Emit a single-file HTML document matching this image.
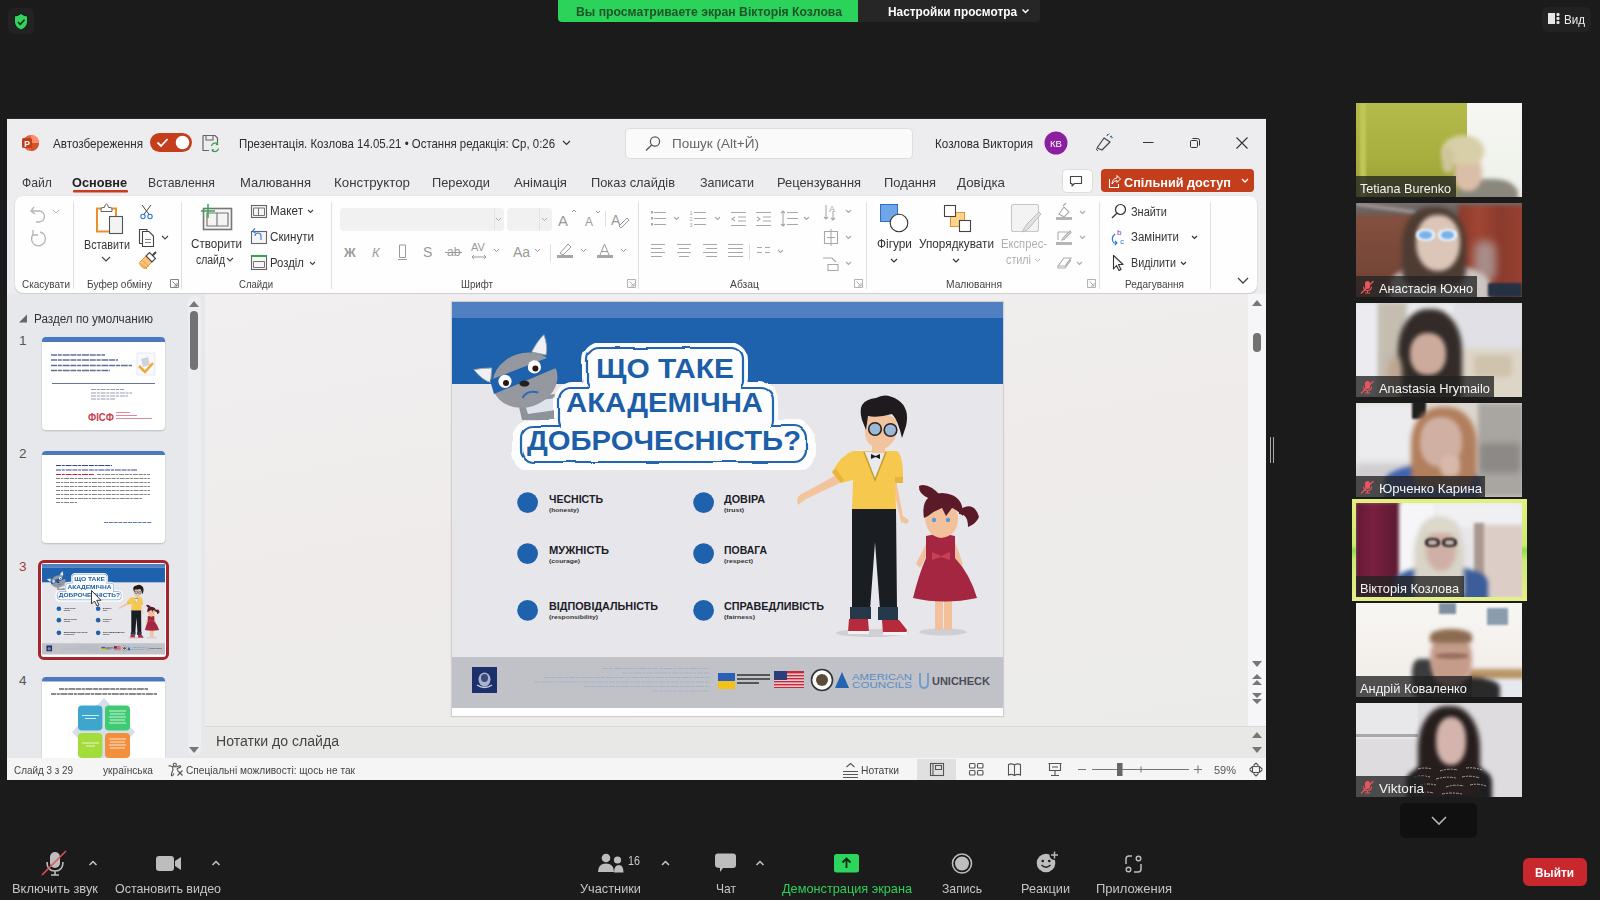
<!DOCTYPE html>
<html><head><meta charset="utf-8">
<style>
*{margin:0;padding:0;box-sizing:border-box}
html,body{width:1600px;height:900px;overflow:hidden;background:#1b1b1b;font-family:"Liberation Sans",sans-serif}
.a{position:absolute}
.t{position:absolute;white-space:nowrap;line-height:1}
#win{left:7px;top:119px;width:1259px;height:661px;background:#ececef;overflow:hidden}
#ribbon{left:8px;top:77px;width:1242px;height:97px;background:#fdfdfd;border-radius:7px;box-shadow:0 1px 2px rgba(0,0,0,.18)}
#leftp{left:0;top:175px;width:198px;height:463px;background:#e6e8eb}
#edit{left:198px;top:175px;width:1061px;height:432px;background:linear-gradient(160deg,#f1eff0,#efebeb 50%,#ecedeb)}
#notes{left:198px;top:607px;width:1061px;height:31px;background:#e9eae8;border-top:1px solid #dcdcdc}
#status{left:0;top:638px;width:1259px;height:23px;background:#f3f3f3}
.tile{position:absolute;left:1356px;width:166px;height:94px;overflow:hidden;background:#555}
.nm{position:absolute;left:0;bottom:0;height:21px;background:rgba(30,30,30,.72);color:#fff;font-size:13px;line-height:21px;padding:0 4px;white-space:nowrap}
.bl{position:absolute}
.tb{position:absolute;color:#c6c6c6;font-size:13px;white-space:nowrap;line-height:1}
</style></head><body>

<!-- top zoom bar -->
<div class="a" style="left:8px;top:8px;width:26px;height:26px;background:#222;border-radius:5px"></div>
<div class="a" style="left:558px;top:0;width:300px;height:22px;background:#2bd35a;border-radius:0 0 0 4px"></div>
<div class="t" style="left:576px;top:5px;font-size:13px;font-weight:bold;color:#1d5429;--w:266px;transform:scaleX(0.9400);transform-origin:0 0">Вы просматриваете экран Вікторія Козлова</div>
<div class="a" style="left:858px;top:0;width:182px;height:22px;background:#262626;border-radius:0 0 4px 0"></div>
<div class="t" style="left:888px;top:5px;font-size:13px;font-weight:bold;color:#fff;--w:129px;transform:scaleX(0.9111);transform-origin:0 0">Настройки просмотра</div>
<div class="a" style="left:1542px;top:7px;width:49px;height:25px;background:#222;border-radius:6px"></div>
<div class="t" style="left:1564px;top:13px;font-size:13px;color:#eee;--w:21px;transform:scaleX(0.8924);transform-origin:0 0">Вид</div>

<!-- PowerPoint window -->
<div class="a" style="left:7px;top:118px;width:1259px;height:662px;background:#edecef;border-top:1px solid #2a2a2a"></div>
<!-- TITLEBAR -->
<svg class="a" style="left:0;top:0" width="1600" height="900" viewBox="0 0 1600 900">
 <!-- ppt logo -->
 <circle cx="31" cy="143" r="8" fill="#e0663c"/>
 <path d="M31 135 A8 8 0 0 1 39 143 L31 143Z" fill="#ff8f6b"/>
 <path d="M31 143 L39 143 A8 8 0 0 1 31 151Z" fill="#d35230"/>
 <rect x="22" y="138" width="10" height="10" rx="1.5" fill="#c43e1c"/>
 <text x="24.2" y="146.6" font-family="Liberation Sans" font-weight="bold" font-size="8.5" fill="#fff">P</text>
 <!-- toggle -->
 <rect x="150" y="133" width="42" height="19" rx="9.5" fill="#c43e1c"/>
 <circle cx="182.5" cy="142.5" r="6.8" fill="#fff"/>
 <path d="M157.5 142.5 L161 146 L167.5 139" stroke="#fff" stroke-width="1.8" fill="none"/>
 <!-- save icon -->
 <path d="M203 135.5 H215 L217.5 138 V143 M203 135.5 V150.5 H209" stroke="#666" stroke-width="1.2" fill="none"/>
 <path d="M206 135.5 V140 H213 V135.5" stroke="#666" stroke-width="1.1" fill="none"/>
 <path d="M211.5 146 A3.6 3.6 0 0 1 218 144.5 M218.5 148.5 A3.6 3.6 0 0 1 212 150" stroke="#2e9e4a" stroke-width="1.3" fill="none"/>
 <path d="M217 142.5 L218.3 145 L215.5 145.3Z M212.6 152 L211.5 149.3 L214.3 149.2Z" fill="#2e9e4a"/>
 <!-- title chevron -->
 <path d="M563 141 L566.5 144.5 L570 141" stroke="#333" stroke-width="1.2" fill="none"/>
 <!-- search box -->
 <rect x="625.5" y="128.5" width="287" height="30" rx="4" fill="#fbfafb" stroke="#dedcde"/>
 <circle cx="655" cy="141.5" r="4.6" stroke="#555" stroke-width="1.2" fill="none"/>
 <path d="M651.6 145 L646 150.5" stroke="#555" stroke-width="1.3"/>
 <!-- avatar -->
 <circle cx="1056" cy="143" r="11.5" fill="#8b1fa0"/>
 <!-- designer pen -->
 <path d="M1097 148 L1104 138 L1110 142 L1102 150 Z" stroke="#444" stroke-width="1.2" fill="none" stroke-linejoin="round"/>
 <path d="M1096 149 L1098 151 M1107 136 L1108 134 M1110 137 L1112 136" stroke="#444" stroke-width="1"/>
 <path d="M1108 135 L1109.5 133.5 M1111 138 L1113 137.5" stroke="#1a8fd6" stroke-width="1"/>
 <!-- window controls -->
 <path d="M1143 142.5 H1153.5" stroke="#333" stroke-width="1"/>
 <rect x="1190.5" y="140.5" width="7" height="7" rx="1.2" stroke="#333" fill="none"/>
 <path d="M1192.5 138.5 H1197.5 Q1199.5 138.5 1199.5 140.5 V145.5" stroke="#333" fill="none"/>
 <path d="M1236.5 137.5 L1247.5 148.5 M1247.5 137.5 L1236.5 148.5" stroke="#333" stroke-width="1.1"/>
 <!-- menu underline -->
 <rect x="73" y="190" width="55" height="2.5" rx="1" fill="#c43e1c"/>
 <!-- comment btn -->
 <rect x="1062.5" y="169.5" width="30" height="23" rx="4" fill="#fdfdfd" stroke="#dcdcdc"/>
 <path d="M1070.5 176.5 H1081.5 V183.5 H1074.5 L1072 186 V183.5 H1070.5 Z" stroke="#444" stroke-width="1.1" fill="none" stroke-linejoin="round"/>
 <!-- share btn -->
 <rect x="1101" y="169" width="153" height="23" rx="4" fill="#c43e1c"/>
 <path d="M1109.5 179 V187.5 H1118.5 V184" stroke="#fff" stroke-width="1.1" fill="none"/>
 <path d="M1112 184 Q1112.5 178.5 1117 178 V175.5 L1120.5 179 L1117 182.5 V180.5 Q1114 180.5 1112 184Z" stroke="#fff" stroke-width="1" fill="none" stroke-linejoin="round"/>
 <path d="M1242 179 L1245 182 L1248 179" stroke="#fff" stroke-width="1.3" fill="none"/>
</svg>
<div class="t" style="left:53px;top:137px;font-size:13px;color:#2d2d2d;--w:90px;transform:scaleX(0.8985);transform-origin:0 0">Автозбереження</div>
<div class="t" style="left:239px;top:137px;font-size:13px;color:#2d2d2d;--w:316px;transform:scaleX(0.8781);transform-origin:0 0">Презентація. Козлова 14.05.21 • Остання редакція: Ср, 0:26</div>
<div class="t" style="left:672px;top:137px;font-size:13px;color:#666;--w:87px;transform:scaleX(1.0409);transform-origin:0 0">Пошук (Alt+Й)</div>
<div class="t" style="left:935px;top:137px;font-size:13px;color:#2d2d2d;--w:98px;transform:scaleX(0.8960);transform-origin:0 0">Козлова Виктория</div>
<div class="t" style="left:1050px;top:139px;font-size:9.5px;color:#fff;--w:12px;transform:scaleX(1.0105);transform-origin:0 0">КВ</div>
<div class="t" style="left:22px;top:176px;font-size:13.5px;color:#3a3a3a;--w:30px;transform:scaleX(0.9035);transform-origin:0 0">Файл</div>
<div class="t" style="left:72px;top:176px;font-size:13.5px;color:#222;font-weight:bold;--w:55px;transform:scaleX(0.9422);transform-origin:0 0">Основне</div>
<div class="t" style="left:148px;top:176px;font-size:13.5px;color:#3a3a3a;--w:67px;transform:scaleX(0.9083);transform-origin:0 0">Вставлення</div>
<div class="t" style="left:240px;top:176px;font-size:13.5px;color:#3a3a3a;--w:71px;transform:scaleX(0.9637);transform-origin:0 0">Малювання</div>
<div class="t" style="left:334px;top:176px;font-size:13.5px;color:#3a3a3a;--w:76px;transform:scaleX(0.9872);transform-origin:0 0">Конструктор</div>
<div class="t" style="left:432px;top:176px;font-size:13.5px;color:#3a3a3a;--w:58px;transform:scaleX(0.9481);transform-origin:0 0">Переходи</div>
<div class="t" style="left:514px;top:176px;font-size:13.5px;color:#3a3a3a;--w:53px;transform:scaleX(0.9761);transform-origin:0 0">Анімація</div>
<div class="t" style="left:591px;top:176px;font-size:13.5px;color:#3a3a3a;--w:84px;transform:scaleX(0.9498);transform-origin:0 0">Показ слайдів</div>
<div class="t" style="left:700px;top:176px;font-size:13.5px;color:#3a3a3a;--w:54px;transform:scaleX(0.9278);transform-origin:0 0">Записати</div>
<div class="t" style="left:777px;top:176px;font-size:13.5px;color:#3a3a3a;--w:84px;transform:scaleX(0.9544);transform-origin:0 0">Рецензування</div>
<div class="t" style="left:884px;top:176px;font-size:13.5px;color:#3a3a3a;--w:52px;transform:scaleX(0.9536);transform-origin:0 0">Подання</div>
<div class="t" style="left:957px;top:176px;font-size:13.5px;color:#3a3a3a;--w:48px;transform:scaleX(0.9884);transform-origin:0 0">Довідка</div>
<div class="t" style="left:1124px;top:176px;font-size:13.5px;color:#fff;font-weight:bold;--w:107px;transform:scaleX(0.9403);transform-origin:0 0">Спільний доступ</div>
<!-- /TITLEBAR -->
<!-- RIBBON -->
<div class="a" style="left:15px;top:196px;width:1242px;height:97px;background:#fefefe;border-radius:8px;box-shadow:0 1px 2px rgba(0,0,0,.16),0 0 1px rgba(0,0,0,.08)"></div>
<svg class="a" style="left:0;top:0" width="1600" height="900" viewBox="0 0 1600 900">
 <g stroke="#e1e1e1" stroke-width="1">
  <path d="M73.5 202 V289 M181.5 202 V289 M331.5 202 V289 M638.5 202 V289 M866.5 202 V289 M1099.5 202 V289 M1210.5 202 V289"/>
  <path d="M605.5 211 V227 M550.5 244 V262 M749.5 244 V260"/>
 </g>
 <!-- launchers -->
 <g stroke="#777" stroke-width="0.9" fill="none">
  <path d="M170.5 279.5 H178.5 V287.5 M170.5 279.5 V287.5 H178.5 M172.5 281.5 L177 286 M177 283 V286 H174"/>
 </g>
 <g stroke="#aaa" stroke-width="0.9" fill="none">
  <path d="M627.5 279.5 H635.5 V287.5 M627.5 279.5 V287.5 H635.5 M629.5 281.5 L634 286 M634 283 V286 H631"/>
  <path d="M854.5 279.5 H862.5 V287.5 M854.5 279.5 V287.5 H862.5 M856.5 281.5 L861 286 M861 283 V286 H858"/>
  <path d="M1087.5 279.5 H1095.5 V287.5 M1087.5 279.5 V287.5 H1095.5 M1089.5 281.5 L1094 286 M1094 283 V286 H1091"/>
 </g>
 <!-- undo/redo -->
 <g stroke="#b4b4b4" stroke-width="1.3" fill="none">
  <path d="M34 207 L31 211 L35 214 M31.5 211 H39 A5.5 5.5 0 0 1 39 222 H36"/>
  <path d="M53 210 L56 213 L59 210" stroke-width="1"/>
  <path d="M40 232 A7 7 0 1 1 33 234.5 M33 230 V235 H38"/>
 </g>
 <!-- paste -->
 <path d="M102 208.5 H97 V231.5 H109" stroke="#e8912b" stroke-width="2" fill="#fff"/>
 <path d="M111 208.5 H116 V216" stroke="#e8912b" stroke-width="2" fill="none"/>
 <path d="M101 211.5 V209 Q101 207.5 103 207.5 H104.5 Q105 204 106.5 204 Q108 204 108.5 207.5 H110 Q112 207.5 112 209 V211.5 Z" fill="#fff" stroke="#666" stroke-width="1"/>
 <rect x="109.5" y="216.5" width="13" height="17" fill="#f3f3f3" stroke="#555" stroke-width="1.1"/>
 <path d="M102 257 L106 261 L110 257" stroke="#444" stroke-width="1.1" fill="none"/>
 <!-- cut -->
 <g stroke="#444" stroke-width="1" fill="none">
  <path d="M142 205 L149.5 215 M151 205 L143.5 215"/>
 </g>
 <circle cx="143" cy="216.5" r="2.2" stroke="#2b7cd3" stroke-width="1.1" fill="none"/>
 <circle cx="150" cy="216.5" r="2.2" stroke="#2b7cd3" stroke-width="1.1" fill="none"/>
 <!-- copy -->
 <path d="M142 243.5 H139.5 V229.5 H147 V231" stroke="#444" stroke-width="1.1" fill="none"/>
 <path d="M142.5 231.5 H149 L153.5 236 V246.5 H142.5 Z" stroke="#444" stroke-width="1.1" fill="#fff"/>
 <path d="M145 239.5 H151 M145 242.5 H151" stroke="#666" stroke-width="0.8"/>
 <path d="M162 236 L165 239 L168 236" stroke="#444" stroke-width="1.1" fill="none"/>
 <!-- format painter -->
 <path d="M139.5 262.5 L146 256 L152 262 L145.5 268.5 Q141 268 139.5 262.5Z" fill="#f8c27a" stroke="#e8912b" stroke-width="1"/>
 <path d="M141.5 264 L147 269 M143 261 L149 266.5" stroke="#e8912b" stroke-width="0.8"/>
 <path d="M146 256 L149.5 252.5 L155.5 258.5 L152 262Z" fill="#fff" stroke="#444" stroke-width="1.1"/>
 <path d="M152.5 255.5 L156 252" stroke="#444" stroke-width="2"/>
 <!-- new slide -->
 <rect x="203.5" y="208.5" width="28" height="21" fill="#f4f4f4" stroke="#777" stroke-width="1.6"/>
 <path d="M207 213 H228 V226 H207 Z M217 213 V226" stroke="#777" stroke-width="1.2" fill="none"/>
 <path d="M208 204 V218 M201 211 H215" stroke="#36a852" stroke-width="1.5"/>
 <path d="M227 258 L230 261 L233 258" stroke="#444" stroke-width="1.1" fill="none"/>
 <!-- layout -->
 <rect x="251.5" y="205.5" width="15" height="12" stroke="#666" stroke-width="1.1" fill="#f5f5f5"/>
 <path d="M253.5 208 H264.5 V215.5 H253.5Z M258.5 208 V215.5" stroke="#666" stroke-width="0.9" fill="none"/>
 <path d="M308 210 L310.5 212.5 L313 210" stroke="#444" stroke-width="1.1" fill="none"/>
 <!-- reset -->
 <rect x="251.5" y="231.5" width="15" height="12" stroke="#666" stroke-width="1.1" fill="#f5f5f5"/>
 <path d="M255 236 A3 3 0 0 1 261 236 V240" stroke="#2b7cd3" stroke-width="1.1" fill="none"/>
 <path d="M252.5 231 L255 228.5 M252.5 231 L255.5 233" stroke="#2b7cd3" stroke-width="1.1" fill="none"/>
 <!-- section -->
 <rect x="251.5" y="255.5" width="15" height="14" stroke="#666" stroke-width="1.1" fill="#f5f5f5"/>
 <path d="M251.5 256 H266.5" stroke="#36a852" stroke-width="2"/>
 <path d="M253.5 261.5 H264.5 V267.5 H253.5Z" stroke="#666" stroke-width="0.9" fill="none"/>
 <path d="M310 262 L312.5 264.5 L315 262" stroke="#444" stroke-width="1.1" fill="none"/>
 <!-- font boxes -->
 <rect x="340" y="208" width="164" height="23" rx="4" fill="#f1f1f1"/>
 <path d="M494.5 209 V230" stroke="#e3e3e3"/>
 <path d="M496 218 L498.5 220.5 L501 218" stroke="#aaa" fill="none"/>
 <rect x="507" y="208" width="45" height="23" rx="4" fill="#f1f1f1"/>
 <path d="M539.5 209 V230" stroke="#e3e3e3"/>
 <path d="M542 218 L544.5 220.5 L547 218" stroke="#aaa" fill="none"/>
 <g font-family="Liberation Sans" fill="#9a9a9a">
  <text x="558" y="226" font-size="15">A</text>
  <text x="585" y="226" font-size="12">A</text>
  <text x="611" y="225" font-size="14">A</text>
  <text x="344" y="257" font-size="13" font-weight="bold">Ж</text>
  <text x="372" y="257" font-size="13" font-style="italic">К</text>
  <text x="423" y="257" font-size="14">S</text>
  <text x="447" y="256" font-size="12">ab</text>
  <text x="471" y="251" font-size="11">AV</text>
  <text x="513" y="257" font-size="14">Aa</text>
 </g>
 <g stroke="#9a9a9a" fill="none" stroke-width="1">
  <path d="M572 212 L574 210 L576 212 M596 211 L598 213 L600 211"/>
  <path d="M619 226 L627 218 L629 220 L621 228Z"/>
  <path d="M399.5 245 H405.5 V257.5 H399.5Z M398 259.5 H407"/>
  <path d="M445 252.5 H462"/>
  <path d="M472 257 H486 M474 255 L472 257 L474 259 M484 255 L486 257 L484 259"/>
  <path d="M494 249 L496.5 251.5 L499 249 M535 249 L537.5 251.5 L540 249 M581 249 L583.5 251.5 L586 249 M621 249 L623.5 251.5 L626 249"/>
  <path d="M560 253 L568 244 L571 247 L563 255Z"/>
  <path d="M600 255 L604.5 244 L609 255 M601.5 251.5 H607.5"/>
 </g>
 <rect x="557" y="255" width="16" height="3" fill="#a6a6a6"/>
 <rect x="597" y="255" width="16" height="3" fill="#a6a6a6"/>
 <!-- paragraph -->
 <g stroke="#a8a8a8" fill="none" stroke-width="1.1">
  <path d="M654 212.5 H666 M654 218.5 H666 M654 224.5 H666"/>
  <path d="M674 217 L676.5 219.5 L679 217 M715 217 L717.5 219.5 L720 217 M804 217 L806.5 219.5 L809 217"/>
  <path d="M694 212.5 H706 M694 218.5 H706 M694 224.5 H706"/>
  <path d="M731 212.5 H746 M738 217 H746 M738 221 H746 M731 225.5 H746 M735 217 L732 219 L735 221"/>
  <path d="M756 212.5 H771 M763 217 H771 M763 221 H771 M756 225.5 H771 M757 217 L760 219 L757 221"/>
  <path d="M787 212.5 H798 M787 218.5 H798 M787 224.5 H798 M783 211 V226 M781 213 L783 211 L785 213 M781 224 L783 226 L785 224"/>
  <path d="M651 244.5 H665 M651 248.5 H662 M651 252.5 H665 M651 256.5 H662"/>
  <path d="M677 244.5 H691 M679 248.5 H689 M677 252.5 H691 M679 256.5 H689"/>
  <path d="M703 244.5 H717 M706 248.5 H717 M703 252.5 H717 M706 256.5 H717"/>
  <path d="M728 244.5 H743 M728 248.5 H743 M728 252.5 H743 M728 256.5 H743"/>
  <path d="M757 247.5 H762 M765 247.5 H770 M757 252.5 H762 M765 252.5 H770"/>
  <path d="M778 250 L780.5 252.5 L783 250"/>
  <path d="M826 205 V219 M824 217 L826 219 L828 217 M833 211 V220 M831 218 L833 220 L835 218 M846 210 L848.5 212.5 L851 210"/>
  <path d="M824.5 231.5 H837.5 V243.5 H824.5Z M831 229 V246 M827 237.5 H835 M846 236 L848.5 238.5 L851 236"/>
  <path d="M823 258 H832 L836 262 M828 264.5 H838 V270.5 H828Z M846 262 L848.5 264.5 L851 262"/>
 </g>
 <g fill="#a8a8a8">
  <rect x="651" y="211" width="2" height="2.5"/><rect x="651" y="217" width="2" height="2.5"/><rect x="651" y="223" width="2" height="2.5"/>
 </g>
 <text x="829" y="212" font-family="Liberation Sans" font-size="9" fill="#a8a8a8">A</text>
 <g font-family="Liberation Sans" font-size="5.5" fill="#a8a8a8"><text x="689.5" y="214.5">1</text><text x="689.5" y="220.5">2</text><text x="689.5" y="226.5">3</text></g>
 <!-- shapes -->
 <rect x="880.5" y="204.5" width="17" height="17" fill="#6ea6e8" stroke="#2b6fc4" stroke-width="1"/>
 <circle cx="899" cy="223" r="8.8" fill="#fff" stroke="#333" stroke-width="1.1"/>
 <path d="M891 259 L894 262 L897 259" stroke="#333" stroke-width="1.2" fill="none"/>
 <!-- arrange -->
 <rect x="950.5" y="212.5" width="14" height="14" fill="#fcd48b" stroke="#e8912b" stroke-width="1"/>
 <rect x="944.5" y="205.5" width="11" height="11" fill="#fff" stroke="#444" stroke-width="1.1"/>
 <rect x="959.5" y="220.5" width="11" height="11" fill="#fff" stroke="#444" stroke-width="1.1"/>
 <path d="M953 259 L956 262 L959 259" stroke="#333" stroke-width="1.2" fill="none"/>
 <!-- quick styles -->
 <rect x="1011.5" y="204.5" width="27" height="27" rx="2" fill="#f3f3f3" stroke="#c8c8c8" stroke-width="1.1"/>
 <path d="M1041 214 L1030 227 Q1027 231 1022 232 Q1025 227 1027 224 L1039 212Z" fill="#e0e0e0" stroke="#bcbcbc"/>
 <path d="M1035 259 L1037.5 261.5 L1040 259" stroke="#bbb" stroke-width="1" fill="none"/>
 <!-- fill / outline / effects -->
 <g stroke="#ababab" fill="none" stroke-width="1.1">
  <path d="M1059 214 L1064 207 L1069 212 L1064 217Z M1063 206 L1066 203"/>
  <path d="M1058 232 H1068 M1058 232 V240 M1070 231 L1063 238 L1062 240 L1064 239.5 L1071 232.5Z"/>
  <path d="M1058 266 L1064 258 H1071 L1065 266Z M1058 266 L1058 268 H1065 L1071 260"/>
  <path d="M1080 211 L1082.5 213.5 L1085 211 M1080 236 L1082.5 238.5 L1085 236 M1077 262 L1079.5 264.5 L1082 262"/>
 </g>
 <rect x="1056" y="217" width="16" height="3" fill="#b5b5b5"/>
 <rect x="1056" y="242" width="16" height="3" fill="#b5b5b5"/>
 <!-- find/replace/select -->
 <circle cx="1120.5" cy="209.5" r="5" stroke="#333" stroke-width="1.2" fill="none"/>
 <path d="M1116.8 213.2 L1112 218" stroke="#333" stroke-width="1.3"/>
 <text x="1117" y="235" font-family="Liberation Sans" font-size="8" fill="#8a3ab9">b</text>
 <text x="1120" y="244" font-family="Liberation Sans" font-size="8" fill="#2b7cd3">c</text>
 <path d="M1115 234 Q1110 238 1114 243 L1117 243 M1115 241 L1117 243 L1115 245" stroke="#2b7cd3" stroke-width="1.1" fill="none"/>
 <path d="M1192 236 L1194.5 238.5 L1197 236" stroke="#333" stroke-width="1.2" fill="none"/>
 <path d="M1113.5 255.5 V269 L1116.5 265.5 L1119 270.5 L1121 269.5 L1118.5 264.5 L1123 264.5Z" stroke="#333" stroke-width="1.1" fill="#fff" stroke-linejoin="round"/>
 <path d="M1181 262 L1183.5 264.5 L1186 262" stroke="#333" stroke-width="1.2" fill="none"/>
 <path d="M1238 278 L1243 283 L1248 278" stroke="#444" stroke-width="1.3" fill="none"/>
</svg>
<div class="t" style="left:22px;top:279px;font-size:11.5px;color:#444;--w:48px;transform:scaleX(0.8678);transform-origin:0 0">Скасувати</div>
<div class="t" style="left:87px;top:279px;font-size:11.5px;color:#444;--w:65px;transform:scaleX(0.8825);transform-origin:0 0">Буфер обміну</div>
<div class="t" style="left:239px;top:279px;font-size:11.5px;color:#444;--w:34px;transform:scaleX(0.8299);transform-origin:0 0">Слайди</div>
<div class="t" style="left:461px;top:279px;font-size:11.5px;color:#444;--w:32px;transform:scaleX(0.8456);transform-origin:0 0">Шрифт</div>
<div class="t" style="left:730px;top:279px;font-size:11.5px;color:#444;--w:29px;transform:scaleX(0.8988);transform-origin:0 0">Абзац</div>
<div class="t" style="left:946px;top:279px;font-size:11.5px;color:#444;--w:56px;transform:scaleX(0.8924);transform-origin:0 0">Малювання</div>
<div class="t" style="left:1125px;top:279px;font-size:11.5px;color:#444;--w:59px;transform:scaleX(0.8719);transform-origin:0 0">Редагування</div>
<div class="t" style="left:84px;top:238.5px;font-size:12.5px;color:#333;--w:46px;transform:scaleX(0.8603);transform-origin:0 0">Вставити</div>
<div class="t" style="left:191px;top:237.5px;font-size:12.5px;color:#333;--w:51px;transform:scaleX(0.9296);transform-origin:0 0">Створити</div>
<div class="t" style="left:196px;top:253.5px;font-size:12.5px;color:#333;--w:29px;transform:scaleX(0.8338);transform-origin:0 0">слайд</div>
<div class="t" style="left:270px;top:205px;font-size:12.5px;color:#333;--w:33px;transform:scaleX(0.9325);transform-origin:0 0">Макет</div>
<div class="t" style="left:270px;top:231px;font-size:12.5px;color:#333;--w:44px;transform:scaleX(0.9294);transform-origin:0 0">Скинути</div>
<div class="t" style="left:270px;top:257px;font-size:12.5px;color:#333;--w:34px;transform:scaleX(0.9086);transform-origin:0 0">Розділ</div>
<div class="t" style="left:877px;top:237.5px;font-size:12.5px;color:#333;--w:35px;transform:scaleX(0.9488);transform-origin:0 0">Фігури</div>
<div class="t" style="left:919px;top:237.5px;font-size:12.5px;color:#333;--w:75px;transform:scaleX(0.9408);transform-origin:0 0">Упорядкувати</div>
<div class="t" style="left:1001px;top:237.5px;font-size:12.5px;color:#b0b0b0;--w:46px;transform:scaleX(0.8967);transform-origin:0 0">Експрес-</div>
<div class="t" style="left:1006px;top:253.5px;font-size:12.5px;color:#b0b0b0;--w:25px;transform:scaleX(0.8611);transform-origin:0 0">стилі</div>
<div class="t" style="left:1131px;top:206px;font-size:12.5px;color:#333;--w:36px;transform:scaleX(0.8757);transform-origin:0 0">Знайти</div>
<div class="t" style="left:1131px;top:231px;font-size:12.5px;color:#333;--w:48px;transform:scaleX(0.9148);transform-origin:0 0">Замінити</div>
<div class="t" style="left:1131px;top:257px;font-size:12.5px;color:#333;--w:45px;transform:scaleX(0.8592);transform-origin:0 0">Виділити</div>
<!-- /RIBBON -->
<!-- LEFTPANEL -->
<div class="a" style="left:7px;top:294px;width:198px;height:464px;background:#e6e8eb"></div>
<div class="a" style="left:188px;top:296px;width:13px;height:460px;background:#eceef0;border-radius:6px"></div>
<svg class="a" style="left:0;top:0" width="1600" height="900" viewBox="0 0 1600 900">
 <path d="M189 307 L194 301 L199 307Z" fill="#777"/>
 <rect x="190" y="311" width="8" height="59" rx="4" fill="#727272"/>
 <path d="M189 747 L194 753 L199 747Z" fill="#777"/>
 <path d="M19 322.5 L27 322.5 L27 314.5Z" fill="#666"/>
</svg>
<div class="t" style="left:34px;top:312.5px;font-size:12.5px;color:#333;--w:119px;transform:scaleX(0.9362);transform-origin:0 0">Раздел по умолчанию</div>
<div class="t" style="left:19px;top:334px;font-size:13.5px;color:#555">1</div>
<div class="t" style="left:19px;top:447px;font-size:13.5px;color:#555">2</div>
<div class="t" style="left:19px;top:560px;font-size:13.5px;color:#a4373a">3</div>
<div class="t" style="left:19px;top:674px;font-size:13.5px;color:#555">4</div>
<!-- thumb 1 -->
<div class="a" style="left:42px;top:337px;width:123px;height:93px;background:#fff;border-radius:4px;box-shadow:0 1px 2px rgba(0,0,0,.2);overflow:hidden">
 <svg width="123" height="93" viewBox="0 0 123 93" style="display:block">
  <rect x="0" y="0" width="123" height="5" fill="#4a79c0"/>
  <g stroke="#4a5580" stroke-width="1.6" stroke-dasharray="6 0.8 4 0.8 7 0.8" fill="none" opacity=".85">
   <path d="M9 18 H63 M9 23 H76 M9 28.5 H90 M9 33.5 H68"/>
  </g>
  <rect x="95" y="16" width="18" height="22" fill="#f7f9fc" stroke="#cfdbe9" stroke-width="0.5"/>
  <path d="M97 29 L103 35 L111 26" stroke="#f0a830" stroke-width="2.5" fill="none"/>
  <path d="M99 22 L106 20 L108 28 L101 30Z" fill="#cfd3da"/>
  <rect x="10" y="46" width="103" height="0.9" fill="#556690"/>
  <g stroke="#8a90a8" stroke-width="0.9" stroke-dasharray="5 0.8 3 0.8" fill="none"><path d="M49 52.5 H82 M49 56 H90 M49 59 H86 M49 62 H73"/></g>
  <text x="46" y="84" font-family="Liberation Sans" font-weight="bold" font-size="10.5" fill="#c84050" textLength="26" lengthAdjust="spacingAndGlyphs">ФІСФ</text>
  <g stroke="#e07a88" stroke-width="0.9" fill="none"><path d="M74 75.5 H88 M74 78.5 H95 M74 81.5 H110"/></g>
 </svg>
</div>
<!-- thumb 2 -->
<div class="a" style="left:42px;top:451px;width:123px;height:92px;background:#fff;border-radius:4px;box-shadow:0 1px 2px rgba(0,0,0,.2);overflow:hidden">
 <svg width="123" height="92" viewBox="0 0 123 92" style="display:block">
  <rect x="0" y="0" width="123" height="4" fill="#4a79c0"/>
  <g stroke-width="1.2" stroke-dasharray="5 0.8 3 0.8 6 0.8" fill="none">
   <path d="M14 14.5 H70" stroke="#34458a"/>
   <path d="M14 19 H95" stroke="#34458a"/>
   <path d="M14 23.5 H52" stroke="#c0283a"/>
  </g>
  <g stroke="#777" stroke-width="0.9" stroke-dasharray="4 0.8 2.5 0.8 5 0.8" fill="none">
   <path d="M55 23.5 H108 M14 27.5 H108 M14 31.5 H108 M14 35.5 H108 M14 39.5 H108 M14 43.5 H108 M14 47.5 H100 M14 51.5 H36"/>
  </g>
  <path d="M62 71.5 H110" stroke="#4a6ab0" stroke-width="0.9" stroke-dasharray="4 0.8" fill="none"/>
 </svg>
</div>
<!-- thumb 3 -->
<div class="a" style="left:38px;top:560px;width:131px;height:100px;border:3px solid #a4262c;border-radius:6px;background:#fff"></div>
<div class="a" style="left:42px;top:564px;width:551px;height:414px;transform:scale(0.2232);transform-origin:0 0;overflow:hidden">
<svg width="551" height="414" viewBox="0 0 551 414" style="display:block">
 <defs><filter id="wob" x="-5%" y="-5%" width="110%" height="110%"><feTurbulence type="fractalNoise" baseFrequency="0.045" numOctaves="1" seed="5"/><feDisplacementMap in="SourceGraphic" scale="4" xChannelSelector="R" yChannelSelector="G"/></filter></defs>
 <rect x="0" y="0" width="551" height="414" fill="#e7e7eb"/>
 <rect x="0" y="0" width="551" height="16" fill="#5080c1"/>
 <rect x="0" y="16" width="551" height="66" fill="#1e61ac"/>
 <rect x="0" y="355" width="551" height="51" fill="#c1c2c7"/>
 <rect x="0" y="406" width="551" height="8" fill="#fdfdfd"/>
 <!-- cat -->
 <g>
  <path d="M65 96 L104 92 L106 118 L70 118 Z" fill="#8e939a"/>
  <path d="M72 100 L104 96 L104 108 L76 112Z" fill="#dfe4ec"/>
  <path d="M79.7 50 Q86 38 91.9 32.7 Q96 44 94 53Z" fill="#eef0f4" stroke="#a0a5ac" stroke-width="1"/>
  <path d="M39.7 66 Q30 66 21.9 67.7 Q30 78 38.6 80.4Z" fill="#eef0f4" stroke="#a0a5ac" stroke-width="1"/>
  <ellipse cx="73" cy="78.2" rx="33" ry="27" transform="rotate(-18 73 78.2)" fill="#95999f"/>
  <path d="M38 78 L100 54 L104 66 L42 92 Z" fill="#1e61ac"/>
  <circle cx="53" cy="79.3" r="6.6" fill="#fff"/><circle cx="54" cy="81" r="3" fill="#2a1616"/>
  <circle cx="82.4" cy="64.9" r="6.6" fill="#fff"/><circle cx="83.4" cy="66.6" r="3" fill="#2a1616"/>
  <ellipse cx="72.4" cy="81.6" rx="5" ry="3" fill="#222"/>
  <path d="M70.8 96 Q74 88 86.3 90.4" stroke="#2a6ab8" stroke-width="2" fill="none"/>
 </g>
 <!-- cloud -->
 <g fill="#fdfdfd" stroke="#fdfdfd" stroke-width="14" stroke-linejoin="round" filter="url(#wob)">
  <rect x="137" y="47" width="152" height="40" rx="12"/>
  <rect x="109" y="87" width="210" height="40" rx="12"/>
  <rect x="67" y="125" width="289" height="37" rx="12"/>
 </g>
 <g filter="url(#wob)"><g fill="none" stroke="#2266b0" stroke-width="2.2">
  <rect x="135" y="46" width="156" height="44" rx="12"/>
  <rect x="107" y="86" width="214" height="44" rx="12"/>
  <rect x="69" y="124" width="285" height="36" rx="12"/>
 </g>
 <g fill="#fdfdfd">
  <rect x="137" y="48" width="152" height="60" rx="11"/>
  <rect x="109" y="88" width="210" height="58" rx="11"/>
  <rect x="71" y="126" width="281" height="32" rx="11"/>
 </g></g>
 <g font-family="Liberation Sans" font-weight="bold" fill="#1d5ea8">
  <text x="144" y="76" font-size="28" textLength="138" lengthAdjust="spacingAndGlyphs">ЩО ТАКЕ</text>
  <text x="114" y="110.3" font-size="27" textLength="197" lengthAdjust="spacingAndGlyphs">АКАДЕМІЧНА</text>
  <text x="75" y="147.8" font-size="28" textLength="274" lengthAdjust="spacingAndGlyphs">ДОБРОЧЕСНІСТЬ?</text>
 </g>
 <!-- bullets -->
 <g fill="#1e61ac">
  <circle cx="75.6" cy="200.6" r="10.4"/><circle cx="75.6" cy="251.6" r="10.4"/><circle cx="75.6" cy="308.4" r="10.4"/>
  <circle cx="251.6" cy="200.6" r="10.4"/><circle cx="251.6" cy="251.6" r="10.4"/><circle cx="251.6" cy="308.4" r="10.4"/>
 </g>
 <g font-family="Liberation Sans" font-weight="bold" fill="#1c1c28">
  <text x="97" y="201.4" font-size="11" textLength="54" lengthAdjust="spacingAndGlyphs">ЧЕСНІСТЬ</text>
  <text x="97" y="252" font-size="11" textLength="60" lengthAdjust="spacingAndGlyphs">МУЖНІСТЬ</text>
  <text x="97" y="308.4" font-size="11" textLength="109" lengthAdjust="spacingAndGlyphs">ВІДПОВІДАЛЬНІСТЬ</text>
  <text x="272" y="201.4" font-size="11" textLength="41" lengthAdjust="spacingAndGlyphs">ДОВІРА</text>
  <text x="272" y="252" font-size="11" textLength="43" lengthAdjust="spacingAndGlyphs">ПОВАГА</text>
  <text x="272" y="308.4" font-size="11" textLength="100" lengthAdjust="spacingAndGlyphs">СПРАВЕДЛИВІСТЬ</text>
  <g font-size="6" fill="#333">
  <text x="97" y="210" textLength="30" lengthAdjust="spacingAndGlyphs">(honesty)</text>
  <text x="97" y="261" textLength="31" lengthAdjust="spacingAndGlyphs">(courage)</text>
  <text x="97" y="317" textLength="49" lengthAdjust="spacingAndGlyphs">(responsibility)</text>
  <text x="272" y="210" textLength="20" lengthAdjust="spacingAndGlyphs">(trust)</text>
  <text x="272" y="261" textLength="29" lengthAdjust="spacingAndGlyphs">(respect)</text>
  <text x="272" y="317" textLength="31" lengthAdjust="spacingAndGlyphs">(fairness)</text>
  </g>
 </g>
 <!-- boy -->
 <g>
  <ellipse cx="420" cy="331" rx="36" ry="4" fill="#d0d0d4"/>
  <ellipse cx="491" cy="330" rx="24" ry="3.5" fill="#d0d0d4"/>
  <path d="M397 317 L416 317 L417 330 Q406 333 396 330 Z" fill="#b52b3c"/>
  <path d="M430 318 L447 318 L455 328 L454 332 L431 332 Z" fill="#b52b3c"/>
  <path d="M396 329 H417 V332 H396Z M431 330 H455 V333 H431Z" fill="#f2f2f2"/>
  <path d="M400 207 L444 207 L445 308 L428 308 L423 240 L418 308 L400 308 Z" fill="#1a1d22"/>
  <path d="M398 305 H419 V317 H398Z M426 305 H446 V318 H426Z" fill="#25394a"/>
  <path d="M386 172 L348 193 L350 199 L390 180 Z" fill="#f2c49e"/>
  <path d="M349 192 Q343 197 346 203 L354 197 Z" fill="#f2c49e"/>
  <path d="M444 178 L451 214 L457 218 L455 222 L449 220 L440 180 Z" fill="#f2c49e"/>
  <path d="M401 149 L445 149 Q450 152 451 170 L451 180 L443 181 L444 207 L400 207 L401 178 L389 181 L380 170 Q390 152 401 149Z" fill="#f6c84e"/>
  <path d="M380 170 L389 181 L392 178 L384 167Z M443 175 H451 V181 H443Z" fill="#e9b43a"/>
  <path d="M412 150 L423 178 L434 150" fill="#e8eaee" stroke="#c9a030" stroke-width="1.6"/>
  <path d="M419 152 L423.5 154 L428 152 L428 157 L423.5 155 L419 157 Z" fill="#1c1c1c"/>
  <rect x="420" y="138" width="13" height="13" fill="#f2c49e"/>
  <path d="M413 122 Q413 112 428 112 Q445 112 445 124 Q446 140 432 147 Q414 146 413 132Z" fill="#f2c49e"/>
  <path d="M410 118 Q404 98 424 96 Q434 90 446 98 Q458 106 454 124 L450 136 Q446 118 440 112 Q426 116 416 114 L414 128 Z" fill="#1f1a1e"/>
  <circle cx="423" cy="127" r="6.3" fill="#9ab8d8" stroke="#2a2222" stroke-width="1.6"/>
  <circle cx="438.5" cy="128" r="6.3" fill="#9ab8d8" stroke="#2a2222" stroke-width="1.6"/>
 </g>
 <!-- girl -->
 <g>
  <path d="M483 297 H491 V328 H483Z M492 297 H500 V328 H492Z" fill="#f2c09a"/>
  <path d="M475 240 L464 262 L468 266 L479 246 Z M503 240 L511 262 L507 266 L499 246Z" fill="#f2c09a"/>
  <path d="M474 234 Q489 230 503 234 L503 256 Q518 272 525 296 Q492 303 461 296 Q467 272 474 256Z" fill="#a52640"/>
  <path d="M480 250 L489 254 L498 250 L498 258 L489 255 L480 258Z" fill="#c84058"/>
  <path d="M473 215 Q473 203 489 203 Q506 203 506 216 Q506 234 489 236 Q474 234 473 215Z" fill="#f2c09a"/>
  <path d="M472 216 Q468 192 490 191 Q512 192 511 214 Q505 208 500 206 L494 214 L490 206 Q482 209 476 214 Z" fill="#5a1a28"/>
  <path d="M478 197 Q466 192 467 184 Q476 180 489 194Z" fill="#5a1a28"/>
  <path d="M507 208 Q522 198 527 215 Q524 222 516 225 Q516 212 507 212Z" fill="#5a1a28"/>
  <circle cx="482" cy="218" r="2.2" fill="#5d9ad0"/><circle cx="496" cy="218" r="2.2" fill="#5d9ad0"/>
 </g>
 <!-- footer logos -->
 <rect x="20" y="365" width="25" height="26" fill="#1d2f6b"/>
 <ellipse cx="32.5" cy="377.5" rx="6" ry="7" fill="#a9b4cc"/>
 <ellipse cx="32.5" cy="376" rx="3.5" ry="4" fill="#3a4a80"/>
 <path d="M25 383 Q32.5 388 40 383" stroke="#c9cfdc" stroke-width="1.5" fill="none"/>
 <g stroke="#9fb2c8" stroke-width="1.1" stroke-dasharray="6 1 4 1 8 1 3 1" fill="none" opacity=".9">
  <path d="M150 366.5 H258 M170 371 H258 M92 375.5 H258 M82 380 H258 M132 384.5 H258 M200 389 H258"/>
 </g>
 <rect x="266" y="371" width="17" height="8" fill="#2b5fb8"/><rect x="266" y="379" width="17" height="8" fill="#f2c21a"/>
 <rect x="285" y="372" width="33" height="2" fill="#555"/><rect x="285" y="376" width="33" height="2" fill="#555"/><rect x="285" y="380" width="22" height="2" fill="#555"/>
 <rect x="322" y="369" width="30" height="17" fill="#c8283a"/>
 <g fill="#eee"><rect x="322" y="371.5" width="30" height="1.3"/><rect x="322" y="374.5" width="30" height="1.3"/><rect x="322" y="377.5" width="30" height="1.3"/><rect x="322" y="380.5" width="30" height="1.3"/><rect x="322" y="383.5" width="30" height="1.3"/></g>
 <rect x="322" y="369" width="13" height="9" fill="#2a3f7a"/>
 <circle cx="370" cy="378" r="10.5" fill="#fff" stroke="#333" stroke-width="1.6"/>
 <circle cx="370" cy="378" r="6" fill="#5c4a3a"/>
 <path d="M390 370 L397 386 H383 Z" fill="#2564b0"/>
 <text x="400" y="378" font-family="Liberation Sans" font-size="8.5" fill="#5a8bc8" textLength="60" lengthAdjust="spacingAndGlyphs">AMERICAN</text>
 <text x="400" y="386" font-family="Liberation Sans" font-size="8.5" fill="#5a8bc8" textLength="60" lengthAdjust="spacingAndGlyphs">COUNCILS</text>
 <path d="M468 371 V381 Q468 386 472 386 Q476 386 476 381 V371" stroke="#6b9bd2" stroke-width="1.8" fill="none"/>
 <text x="480" y="383" font-family="Liberation Sans" font-weight="bold" font-size="11" fill="#4a4c58" textLength="58" lengthAdjust="spacingAndGlyphs">UNICHECK</text>
</svg>

</div>
<svg class="a" style="left:0;top:0" width="1600" height="900" viewBox="0 0 1600 900">
 <path d="M91.5 590.5 V604 L94.5 601 L97 606 L99 605 L96.7 600.3 L101 600.3Z" fill="#fff" stroke="#222" stroke-width="0.9" stroke-linejoin="round"/>
</svg>
<!-- thumb 4 -->
<div class="a" style="left:42px;top:677px;width:123px;height:81px;background:#fff;border-radius:4px 4px 0 0;box-shadow:0 1px 2px rgba(0,0,0,.2);overflow:hidden">
 <svg width="123" height="81" viewBox="0 0 123 81" style="display:block">
  <rect x="0" y="0" width="123" height="4.5" fill="#4a79c0"/>
  <g stroke="#333" stroke-width="1.3" stroke-dasharray="5 0.7 3 0.7 7 0.7" fill="none" opacity=".75">
   <path d="M17 12 H106 M9 17 H115"/>
  </g>
  <path d="M62 21 L93 55 L62 89 L30 55Z" fill="#d5dfea"/>
  <rect x="36" y="28.6" width="24.4" height="25" rx="4" fill="#3ea6cc"/>
  <rect x="63" y="28.6" width="25" height="25" rx="4" fill="#3ecb72"/>
  <rect x="36" y="56" width="24.4" height="25" rx="4" fill="#a4dc3c"/>
  <rect x="63" y="56" width="25" height="25" rx="4" fill="#f28e3c"/>
  <g stroke="#fff" stroke-width="0.9" fill="none" opacity=".85">
   <path d="M40 38.5 H57 M43 41.5 H54 M67 34 H84 M68 37 H83 M67 40 H84 M68 43 H83 M67 46 H84 M40 66 H57 M44 69 H53 M67 62 H84 M68 65 H83 M67 68 H84 M68 71 H83"/>
  </g>
 </svg>
</div>
<!-- /LEFTPANEL -->
<!-- EDIT -->
<div class="a" style="left:205px;top:294px;width:1061px;height:432px;background:linear-gradient(170deg,#f1eff0 0%,#efebeb 50%,#ebecea 100%)"></div>
<div class="a" style="left:1248px;top:294px;width:18px;height:432px;background:#f6f6f8"></div>
<div class="a" style="left:452px;top:302px;width:551px;height:414px;box-shadow:0 0 1px 1px rgba(0,0,0,.12)">
<svg width="551" height="414" viewBox="0 0 551 414" style="display:block">
 <defs><filter id="wob" x="-5%" y="-5%" width="110%" height="110%"><feTurbulence type="fractalNoise" baseFrequency="0.045" numOctaves="1" seed="5"/><feDisplacementMap in="SourceGraphic" scale="4" xChannelSelector="R" yChannelSelector="G"/></filter></defs>
 <rect x="0" y="0" width="551" height="414" fill="#e7e7eb"/>
 <rect x="0" y="0" width="551" height="16" fill="#5080c1"/>
 <rect x="0" y="16" width="551" height="66" fill="#1e61ac"/>
 <rect x="0" y="355" width="551" height="51" fill="#c1c2c7"/>
 <rect x="0" y="406" width="551" height="8" fill="#fdfdfd"/>
 <!-- cat -->
 <g>
  <path d="M65 96 L104 92 L106 118 L70 118 Z" fill="#8e939a"/>
  <path d="M72 100 L104 96 L104 108 L76 112Z" fill="#dfe4ec"/>
  <path d="M79.7 50 Q86 38 91.9 32.7 Q96 44 94 53Z" fill="#eef0f4" stroke="#a0a5ac" stroke-width="1"/>
  <path d="M39.7 66 Q30 66 21.9 67.7 Q30 78 38.6 80.4Z" fill="#eef0f4" stroke="#a0a5ac" stroke-width="1"/>
  <ellipse cx="73" cy="78.2" rx="33" ry="27" transform="rotate(-18 73 78.2)" fill="#95999f"/>
  <path d="M38 78 L100 54 L104 66 L42 92 Z" fill="#1e61ac"/>
  <circle cx="53" cy="79.3" r="6.6" fill="#fff"/><circle cx="54" cy="81" r="3" fill="#2a1616"/>
  <circle cx="82.4" cy="64.9" r="6.6" fill="#fff"/><circle cx="83.4" cy="66.6" r="3" fill="#2a1616"/>
  <ellipse cx="72.4" cy="81.6" rx="5" ry="3" fill="#222"/>
  <path d="M70.8 96 Q74 88 86.3 90.4" stroke="#2a6ab8" stroke-width="2" fill="none"/>
 </g>
 <!-- cloud -->
 <g fill="#fdfdfd" stroke="#fdfdfd" stroke-width="14" stroke-linejoin="round" filter="url(#wob)">
  <rect x="137" y="47" width="152" height="40" rx="12"/>
  <rect x="109" y="87" width="210" height="40" rx="12"/>
  <rect x="67" y="125" width="289" height="37" rx="12"/>
 </g>
 <g filter="url(#wob)"><g fill="none" stroke="#2266b0" stroke-width="2.2">
  <rect x="135" y="46" width="156" height="44" rx="12"/>
  <rect x="107" y="86" width="214" height="44" rx="12"/>
  <rect x="69" y="124" width="285" height="36" rx="12"/>
 </g>
 <g fill="#fdfdfd">
  <rect x="137" y="48" width="152" height="60" rx="11"/>
  <rect x="109" y="88" width="210" height="58" rx="11"/>
  <rect x="71" y="126" width="281" height="32" rx="11"/>
 </g></g>
 <g font-family="Liberation Sans" font-weight="bold" fill="#1d5ea8">
  <text x="144" y="76" font-size="28" textLength="138" lengthAdjust="spacingAndGlyphs">ЩО ТАКЕ</text>
  <text x="114" y="110.3" font-size="27" textLength="197" lengthAdjust="spacingAndGlyphs">АКАДЕМІЧНА</text>
  <text x="75" y="147.8" font-size="28" textLength="274" lengthAdjust="spacingAndGlyphs">ДОБРОЧЕСНІСТЬ?</text>
 </g>
 <!-- bullets -->
 <g fill="#1e61ac">
  <circle cx="75.6" cy="200.6" r="10.4"/><circle cx="75.6" cy="251.6" r="10.4"/><circle cx="75.6" cy="308.4" r="10.4"/>
  <circle cx="251.6" cy="200.6" r="10.4"/><circle cx="251.6" cy="251.6" r="10.4"/><circle cx="251.6" cy="308.4" r="10.4"/>
 </g>
 <g font-family="Liberation Sans" font-weight="bold" fill="#1c1c28">
  <text x="97" y="201.4" font-size="11" textLength="54" lengthAdjust="spacingAndGlyphs">ЧЕСНІСТЬ</text>
  <text x="97" y="252" font-size="11" textLength="60" lengthAdjust="spacingAndGlyphs">МУЖНІСТЬ</text>
  <text x="97" y="308.4" font-size="11" textLength="109" lengthAdjust="spacingAndGlyphs">ВІДПОВІДАЛЬНІСТЬ</text>
  <text x="272" y="201.4" font-size="11" textLength="41" lengthAdjust="spacingAndGlyphs">ДОВІРА</text>
  <text x="272" y="252" font-size="11" textLength="43" lengthAdjust="spacingAndGlyphs">ПОВАГА</text>
  <text x="272" y="308.4" font-size="11" textLength="100" lengthAdjust="spacingAndGlyphs">СПРАВЕДЛИВІСТЬ</text>
  <g font-size="6" fill="#333">
  <text x="97" y="210" textLength="30" lengthAdjust="spacingAndGlyphs">(honesty)</text>
  <text x="97" y="261" textLength="31" lengthAdjust="spacingAndGlyphs">(courage)</text>
  <text x="97" y="317" textLength="49" lengthAdjust="spacingAndGlyphs">(responsibility)</text>
  <text x="272" y="210" textLength="20" lengthAdjust="spacingAndGlyphs">(trust)</text>
  <text x="272" y="261" textLength="29" lengthAdjust="spacingAndGlyphs">(respect)</text>
  <text x="272" y="317" textLength="31" lengthAdjust="spacingAndGlyphs">(fairness)</text>
  </g>
 </g>
 <!-- boy -->
 <g>
  <ellipse cx="420" cy="331" rx="36" ry="4" fill="#d0d0d4"/>
  <ellipse cx="491" cy="330" rx="24" ry="3.5" fill="#d0d0d4"/>
  <path d="M397 317 L416 317 L417 330 Q406 333 396 330 Z" fill="#b52b3c"/>
  <path d="M430 318 L447 318 L455 328 L454 332 L431 332 Z" fill="#b52b3c"/>
  <path d="M396 329 H417 V332 H396Z M431 330 H455 V333 H431Z" fill="#f2f2f2"/>
  <path d="M400 207 L444 207 L445 308 L428 308 L423 240 L418 308 L400 308 Z" fill="#1a1d22"/>
  <path d="M398 305 H419 V317 H398Z M426 305 H446 V318 H426Z" fill="#25394a"/>
  <path d="M386 172 L348 193 L350 199 L390 180 Z" fill="#f2c49e"/>
  <path d="M349 192 Q343 197 346 203 L354 197 Z" fill="#f2c49e"/>
  <path d="M444 178 L451 214 L457 218 L455 222 L449 220 L440 180 Z" fill="#f2c49e"/>
  <path d="M401 149 L445 149 Q450 152 451 170 L451 180 L443 181 L444 207 L400 207 L401 178 L389 181 L380 170 Q390 152 401 149Z" fill="#f6c84e"/>
  <path d="M380 170 L389 181 L392 178 L384 167Z M443 175 H451 V181 H443Z" fill="#e9b43a"/>
  <path d="M412 150 L423 178 L434 150" fill="#e8eaee" stroke="#c9a030" stroke-width="1.6"/>
  <path d="M419 152 L423.5 154 L428 152 L428 157 L423.5 155 L419 157 Z" fill="#1c1c1c"/>
  <rect x="420" y="138" width="13" height="13" fill="#f2c49e"/>
  <path d="M413 122 Q413 112 428 112 Q445 112 445 124 Q446 140 432 147 Q414 146 413 132Z" fill="#f2c49e"/>
  <path d="M410 118 Q404 98 424 96 Q434 90 446 98 Q458 106 454 124 L450 136 Q446 118 440 112 Q426 116 416 114 L414 128 Z" fill="#1f1a1e"/>
  <circle cx="423" cy="127" r="6.3" fill="#9ab8d8" stroke="#2a2222" stroke-width="1.6"/>
  <circle cx="438.5" cy="128" r="6.3" fill="#9ab8d8" stroke="#2a2222" stroke-width="1.6"/>
 </g>
 <!-- girl -->
 <g>
  <path d="M483 297 H491 V328 H483Z M492 297 H500 V328 H492Z" fill="#f2c09a"/>
  <path d="M475 240 L464 262 L468 266 L479 246 Z M503 240 L511 262 L507 266 L499 246Z" fill="#f2c09a"/>
  <path d="M474 234 Q489 230 503 234 L503 256 Q518 272 525 296 Q492 303 461 296 Q467 272 474 256Z" fill="#a52640"/>
  <path d="M480 250 L489 254 L498 250 L498 258 L489 255 L480 258Z" fill="#c84058"/>
  <path d="M473 215 Q473 203 489 203 Q506 203 506 216 Q506 234 489 236 Q474 234 473 215Z" fill="#f2c09a"/>
  <path d="M472 216 Q468 192 490 191 Q512 192 511 214 Q505 208 500 206 L494 214 L490 206 Q482 209 476 214 Z" fill="#5a1a28"/>
  <path d="M478 197 Q466 192 467 184 Q476 180 489 194Z" fill="#5a1a28"/>
  <path d="M507 208 Q522 198 527 215 Q524 222 516 225 Q516 212 507 212Z" fill="#5a1a28"/>
  <circle cx="482" cy="218" r="2.2" fill="#5d9ad0"/><circle cx="496" cy="218" r="2.2" fill="#5d9ad0"/>
 </g>
 <!-- footer logos -->
 <rect x="20" y="365" width="25" height="26" fill="#1d2f6b"/>
 <ellipse cx="32.5" cy="377.5" rx="6" ry="7" fill="#a9b4cc"/>
 <ellipse cx="32.5" cy="376" rx="3.5" ry="4" fill="#3a4a80"/>
 <path d="M25 383 Q32.5 388 40 383" stroke="#c9cfdc" stroke-width="1.5" fill="none"/>
 <g stroke="#9fb2c8" stroke-width="1.1" stroke-dasharray="6 1 4 1 8 1 3 1" fill="none" opacity=".9">
  <path d="M150 366.5 H258 M170 371 H258 M92 375.5 H258 M82 380 H258 M132 384.5 H258 M200 389 H258"/>
 </g>
 <rect x="266" y="371" width="17" height="8" fill="#2b5fb8"/><rect x="266" y="379" width="17" height="8" fill="#f2c21a"/>
 <rect x="285" y="372" width="33" height="2" fill="#555"/><rect x="285" y="376" width="33" height="2" fill="#555"/><rect x="285" y="380" width="22" height="2" fill="#555"/>
 <rect x="322" y="369" width="30" height="17" fill="#c8283a"/>
 <g fill="#eee"><rect x="322" y="371.5" width="30" height="1.3"/><rect x="322" y="374.5" width="30" height="1.3"/><rect x="322" y="377.5" width="30" height="1.3"/><rect x="322" y="380.5" width="30" height="1.3"/><rect x="322" y="383.5" width="30" height="1.3"/></g>
 <rect x="322" y="369" width="13" height="9" fill="#2a3f7a"/>
 <circle cx="370" cy="378" r="10.5" fill="#fff" stroke="#333" stroke-width="1.6"/>
 <circle cx="370" cy="378" r="6" fill="#5c4a3a"/>
 <path d="M390 370 L397 386 H383 Z" fill="#2564b0"/>
 <text x="400" y="378" font-family="Liberation Sans" font-size="8.5" fill="#5a8bc8" textLength="60" lengthAdjust="spacingAndGlyphs">AMERICAN</text>
 <text x="400" y="386" font-family="Liberation Sans" font-size="8.5" fill="#5a8bc8" textLength="60" lengthAdjust="spacingAndGlyphs">COUNCILS</text>
 <path d="M468 371 V381 Q468 386 472 386 Q476 386 476 381 V371" stroke="#6b9bd2" stroke-width="1.8" fill="none"/>
 <text x="480" y="383" font-family="Liberation Sans" font-weight="bold" font-size="11" fill="#4a4c58" textLength="58" lengthAdjust="spacingAndGlyphs">UNICHECK</text>
</svg>

</div>
<div class="a" style="left:205px;top:726px;width:1061px;height:32px;background:#e8e9e7;border-top:1px solid #dadada"></div>
<div class="t" style="left:216px;top:734px;font-size:14px;color:#444;--w:123px;transform:scaleX(1.0069);transform-origin:0 0">Нотатки до слайда</div>
<svg class="a" style="left:0;top:0" width="1600" height="900" viewBox="0 0 1600 900">
 <g fill="#777">
  <path d="M1252 306 L1257 300 L1262 306Z"/>
  <rect x="1253" y="333" width="8" height="19" rx="4" fill="#727272"/>
  <path d="M1252 661 L1257 667 L1262 661Z"/>
  <path d="M1252 679 L1257 674 L1262 679Z M1252 685 L1257 680 L1262 685Z"/>
  <path d="M1252 693 L1257 698 L1262 693Z M1252 699 L1257 704 L1262 699Z"/>
  <path d="M1252 738 L1257 732 L1262 738Z"/>
  <path d="M1252 747 L1257 753 L1262 747Z"/>
 </g>
 <path d="M1270.5 437 V463 M1273.5 437 V463" stroke="#aaa" stroke-width="1"/>
</svg>
<!-- /EDIT -->
<!-- STATUS -->
<div class="a" style="left:7px;top:758px;width:1259px;height:22px;background:#f5f5f5"></div>
<div class="t" style="left:14px;top:765px;font-size:11.5px;color:#444;--w:59px;transform:scaleX(0.8601);transform-origin:0 0">Слайд 3 з 29</div>
<div class="t" style="left:103px;top:765px;font-size:11.5px;color:#444;--w:50px;transform:scaleX(0.8842);transform-origin:0 0">українська</div>
<div class="t" style="left:186px;top:765px;font-size:11.5px;color:#444;--w:169px;transform:scaleX(0.8812);transform-origin:0 0">Спеціальні можливості: щось не так</div>
<div class="t" style="left:861px;top:765px;font-size:11.5px;color:#444;--w:38px;transform:scaleX(0.8951);transform-origin:0 0">Нотатки</div>
<div class="t" style="left:1214px;top:765px;font-size:11.5px;color:#555;--w:22px;transform:scaleX(0.9552);transform-origin:0 0">59%</div>
<div class="a" style="left:917px;top:759px;width:39px;height:21px;background:#e0e0e0"></div>
<svg class="a" style="left:0;top:0" width="1600" height="900" viewBox="0 0 1600 900">
 <g stroke="#555" stroke-width="1.1" fill="none">
  <circle cx="174.8" cy="764.8" r="1.6"/>
  <path d="M169 766.5 Q169 765.5 170 765.8 L172.5 766.8 H177 L179.5 765.8 Q181 765.5 180.5 767 L177.5 768.5 L177 770 M172.5 766.8 L173 769.5 L171.5 774 Q171 776 172.5 775.8 L174 773.5 M177.5 770.5 L182.5 775.5 M182.5 770.5 L177.5 775.5"/>
  <path d="M843 771.5 H858 M843 774.5 H858 M843 777.5 H858 M846.5 767 L850.5 763.5 L854.5 767"/>
  <rect x="930.5" y="763.5" width="13" height="12"/>
  <path d="M933 763.5 V775.5 M935.5 765.5 H941.5 V769.5 H935.5Z"/>
  <rect x="969.5" y="763.5" width="5.5" height="4.5" rx="1"/><rect x="977.5" y="763.5" width="5.5" height="4.5" rx="1"/>
  <rect x="969.5" y="770.5" width="5.5" height="4.5" rx="1"/><rect x="977.5" y="770.5" width="5.5" height="4.5" rx="1"/>
  <path d="M1008.5 764.5 Q1011.5 763 1014.5 765 Q1017.5 763 1020.5 764.5 V775 Q1017.5 773.5 1014.5 775.5 Q1011.5 773.5 1008.5 775Z M1014.5 765 V775.5"/>
  <path d="M1048.5 763.5 H1061.5 M1049.5 763.5 V770.5 H1060.5 V763.5 M1055 770.5 V775 M1051 775.5 H1059 M1052 767 H1058"/>
  <path d="M1078 769.5 H1086 M1092 769.5 H1189 M1194 769.5 H1202 M1198 765.5 V773.5 M1141 766.5 V772.5" stroke="#777"/>
  <path d="M1249.5 769.5 L1252 767 M1249.5 769.5 L1252 772 M1262.5 769.5 L1260 767 M1262.5 769.5 L1260 772 M1256 763 L1253.5 765.5 M1256 763 L1258.5 765.5 M1256 776 L1253.5 773.5 M1256 776 L1258.5 773.5"/>
  <rect x="1252.5" y="766.5" width="7" height="6"/>
 </g>
 <rect x="1117" y="763" width="5.5" height="13" fill="#666"/>
</svg>
<!-- /STATUS -->
<!-- video tiles -->
<div class="a" style="left:1352px;top:499px;width:175px;height:102px;background:linear-gradient(180deg,#e3f07e 0%,#d0ea70 45%,#8fdc48 50%,#cfe878 60%,#e6f088 100%)"></div>
<div class="tile" style="top:103px"><div class="a" style="left:0;top:0;width:112px;height:94px;background:linear-gradient(180deg,#b4bb4a 0%,#a8ae3e 60%,#949a34 100%)"></div><div class="a" style="left:4px;top:0;width:6px;height:94px;background:#c0c658;filter:blur(1px)"></div><div class="a" style="left:111px;top:0;width:55px;height:94px;background:linear-gradient(180deg,#f6f7f2,#eef0ea)"></div><div class="bl" style="left:100px;top:76px;width:62px;height:36px;background:#8a887c;border-radius:40%;filter:blur(2px)"></div><div class="bl" style="left:98px;top:52px;width:28px;height:36px;background:#dbbea8;border-radius:45%;filter:blur(2px)"></div><div class="bl" style="left:86px;top:32px;width:42px;height:30px;background:#d8cfa8;border-radius:50% 50% 40% 40%;filter:blur(2px)"></div><div class="bl" style="left:86px;top:44px;width:12px;height:26px;background:#cfc59c;border-radius:40%;filter:blur(2px)"></div><div class="a" style="left:0;top:73px;width:100px;height:21px;background:rgba(35,35,35,.78)"></div><div class="t" style="left:4px;top:79px;font-size:13px;color:#f4f4f4;--w:91px;transform:scaleX(0.9686);transform-origin:0 0">Tetiana Burenko</div></div>
<div class="tile" style="top:203px"><div class="a" style="left:0;top:0;width:166px;height:94px;background:#5a4f4b"></div><div class="a" style="left:0;top:0;width:166px;height:20px;background:linear-gradient(180deg,#736d6b,#5e5755)"></div><div class="bl" style="left:-4px;top:12px;width:62px;height:90px;background:linear-gradient(180deg,#85503f,#6c4033);border-radius:2%;filter:blur(2px)"></div><div class="bl" style="left:0px;top:3px;width:60px;height:4px;background:#9a9290;border-radius:0;filter:blur(1.5px);transform:rotate(8deg)"></div><div class="bl" style="left:102px;top:2px;width:70px;height:96px;background:linear-gradient(90deg,#8c3a2c,#a04634 30%,#8a3a2c 60%,#9a4232);border-radius:2%;filter:blur(2.5px)"></div><div class="bl" style="left:118px;top:38px;width:22px;height:40px;background:#a88c88;border-radius:30%;filter:blur(4px)"></div><div class="bl" style="left:34px;top:62px;width:100px;height:42px;background:#cbc5c3;border-radius:45% 45% 10% 10%;filter:blur(2.5px)"></div><div class="bl" style="left:46px;top:4px;width:64px;height:80px;background:#4e3c32;border-radius:45% 45% 20% 20%;filter:blur(2.5px)"></div><div class="bl" style="left:60px;top:12px;width:44px;height:56px;background:#dcc6b8;border-radius:45% 45% 48% 48%;filter:blur(2px)"></div><div class="bl" style="left:60px;top:26px;width:19px;height:12px;background:#e9f3ff;border-radius:45%;filter:blur(1px)"></div><div class="bl" style="left:82px;top:26px;width:19px;height:12px;background:#e9f3ff;border-radius:45%;filter:blur(1px)"></div><div class="bl" style="left:63px;top:28px;width:13px;height:8px;background:#7ab2e8;border-radius:45%;filter:blur(1px)"></div><div class="bl" style="left:85px;top:28px;width:13px;height:8px;background:#7ab2e8;border-radius:45%;filter:blur(1px)"></div><div class="bl" style="left:132px;top:80px;width:34px;height:14px;background:#243244;border-radius:10%;filter:blur(1px)"></div><div class="a" style="left:0;top:73px;width:121px;height:21px;background:rgba(35,35,35,.78)"></div><svg class="a" style="left:4px;top:77px" width="14" height="14" viewBox="0 0 14 14"><rect x="5" y="1" width="5" height="8" rx="2.5" fill="#e8555f"/><path d="M3.5 6.5 Q3.5 10.5 7.5 10.5 Q11.5 10.5 11.5 6.5 M7.5 10.5 V13 M5 13 H10" stroke="#e8555f" stroke-width="1.1" fill="none"/><path d="M1 13.5 L13.5 1" stroke="#e8555f" stroke-width="1.3"/></svg><div class="t" style="left:23px;top:79px;font-size:13px;color:#f4f4f4;--w:94px;transform:scaleX(0.9720);transform-origin:0 0">Анастасія Юхно</div></div>
<div class="tile" style="top:303px"><div class="a" style="left:0;top:0;width:166px;height:94px;background:#dcdadd"></div><div class="bl" style="left:-2px;top:0px;width:24px;height:94px;background:#ececf0;border-radius:0;filter:blur(2px)"></div><div class="bl" style="left:22px;top:0px;width:30px;height:94px;background:#c4bdb0;border-radius:0;filter:blur(2px)"></div><div class="bl" style="left:52px;top:0px;width:48px;height:50px;background:#eeeeee;border-radius:0;filter:blur(3px)"></div><div class="bl" style="left:98px;top:0px;width:70px;height:48px;background:#e0e0e6;border-radius:0;filter:blur(3px)"></div><div class="bl" style="left:100px;top:46px;width:68px;height:50px;background:#ddd5c6;border-radius:10%;filter:blur(3px)"></div><div class="bl" style="left:118px;top:52px;width:38px;height:22px;background:#cfc3ad;border-radius:20%;filter:blur(2px)"></div><div class="bl" style="left:42px;top:6px;width:64px;height:92px;background:#322b28;border-radius:45% 45% 10% 10%;filter:blur(2.5px)"></div><div class="bl" style="left:32px;top:54px;width:14px;height:40px;background:#bda68f;border-radius:40%;filter:blur(3px)"></div><div class="bl" style="left:54px;top:30px;width:36px;height:42px;background:#cdab9c;border-radius:45%;filter:blur(2px)"></div><div class="a" style="left:0;top:73px;width:138px;height:21px;background:rgba(35,35,35,.78)"></div><svg class="a" style="left:4px;top:77px" width="14" height="14" viewBox="0 0 14 14"><rect x="5" y="1" width="5" height="8" rx="2.5" fill="#e8555f"/><path d="M3.5 6.5 Q3.5 10.5 7.5 10.5 Q11.5 10.5 11.5 6.5 M7.5 10.5 V13 M5 13 H10" stroke="#e8555f" stroke-width="1.1" fill="none"/><path d="M1 13.5 L13.5 1" stroke="#e8555f" stroke-width="1.3"/></svg><div class="t" style="left:23px;top:79px;font-size:13px;color:#f4f4f4;--w:111px;transform:scaleX(0.9911);transform-origin:0 0">Anastasia Hrymailo</div></div>
<div class="tile" style="top:403px"><div class="a" style="left:0;top:0;width:166px;height:94px;background:#ddd6ce"></div><div class="bl" style="left:-2px;top:0px;width:62px;height:66px;background:#ececee;border-radius:0;filter:blur(3px)"></div><div class="bl" style="left:0px;top:60px;width:60px;height:34px;background:#cfcdd0;border-radius:0;filter:blur(3px)"></div><div class="bl" style="left:56px;top:-2px;width:14px;height:18px;background:#1e1e1e;border-radius:10%;filter:blur(1px)"></div><div class="bl" style="left:122px;top:0px;width:46px;height:94px;background:#a9a6a2;border-radius:0;filter:blur(2px)"></div><div class="bl" style="left:124px;top:40px;width:40px;height:30px;background:#8c8986;border-radius:10%;filter:blur(3px)"></div><div class="bl" style="left:28px;top:62px;width:96px;height:38px;background:#4063b0;border-radius:45% 45% 5% 5%;filter:blur(2px)"></div><div class="bl" style="left:55px;top:4px;width:66px;height:80px;background:#b27f5e;border-radius:45% 45% 20% 20%;filter:blur(2.5px)"></div><div class="bl" style="left:64px;top:14px;width:42px;height:50px;background:#d0b0a2;border-radius:45%;filter:blur(2px)"></div><div class="bl" style="left:84px;top:52px;width:20px;height:22px;background:#d8b8aa;border-radius:40%;filter:blur(2px)"></div><div class="a" style="left:0;top:73px;width:129px;height:21px;background:rgba(35,35,35,.78)"></div><svg class="a" style="left:4px;top:77px" width="14" height="14" viewBox="0 0 14 14"><rect x="5" y="1" width="5" height="8" rx="2.5" fill="#e8555f"/><path d="M3.5 6.5 Q3.5 10.5 7.5 10.5 Q11.5 10.5 11.5 6.5 M7.5 10.5 V13 M5 13 H10" stroke="#e8555f" stroke-width="1.1" fill="none"/><path d="M1 13.5 L13.5 1" stroke="#e8555f" stroke-width="1.3"/></svg><div class="t" style="left:23px;top:79px;font-size:13px;color:#f4f4f4;--w:103px;transform:scaleX(1.0134);transform-origin:0 0">Юрченко Карина</div></div>
<div class="tile" style="top:503px"><div class="a" style="left:0;top:0;width:166px;height:94px;background:#e8e6ea"></div><div class="bl" style="left:-2px;top:-2px;width:46px;height:98px;background:linear-gradient(90deg,#5e1830,#7a2040 40%,#5a1a30);border-radius:0;filter:blur(2px)"></div><div class="bl" style="left:44px;top:0px;width:36px;height:94px;background:#f6f6f8;border-radius:0;filter:blur(2px)"></div><div class="bl" style="left:80px;top:0px;width:86px;height:24px;background:#f0f0f2;border-radius:0;filter:blur(2px)"></div><div class="bl" style="left:124px;top:22px;width:44px;height:74px;background:#dccdc6;border-radius:0;filter:blur(2px)"></div><div class="bl" style="left:118px;top:20px;width:10px;height:76px;background:#a89890;border-radius:0;filter:blur(1.5px)"></div><div class="bl" style="left:38px;top:64px;width:94px;height:38px;background:#3c5c9a;border-radius:40% 40% 5% 5%;filter:blur(2px)"></div><div class="bl" style="left:58px;top:14px;width:50px;height:82px;background:#d8d4c8;border-radius:45% 45% 10% 10%;filter:blur(2.5px)"></div><div class="bl" style="left:70px;top:26px;width:30px;height:42px;background:#d0b0a6;border-radius:45% 45% 48% 48%;filter:blur(2px)"></div><div class="bl" style="left:68px;top:18px;width:34px;height:12px;background:#dcd8cc;border-radius:40%;filter:blur(2px)"></div><div class="bl" style="left:69px;top:35px;width:15px;height:9px;background:#2e2626;border-radius:40%;filter:blur(1px)"></div><div class="bl" style="left:86px;top:35px;width:15px;height:9px;background:#2e2626;border-radius:40%;filter:blur(1px)"></div><div class="bl" style="left:72px;top:37px;width:9px;height:5px;background:#c2b0aa;border-radius:40%;filter:blur(1px)"></div><div class="bl" style="left:89px;top:37px;width:9px;height:5px;background:#c2b0aa;border-radius:40%;filter:blur(1px)"></div><div class="a" style="left:0;top:73px;width:108px;height:21px;background:rgba(35,35,35,.78)"></div><div class="t" style="left:4px;top:79px;font-size:13px;color:#f4f4f4;--w:99px;transform:scaleX(0.9839);transform-origin:0 0">Вікторія Козлова</div></div>
<div class="tile" style="top:603px"><div class="a" style="left:0;top:0;width:166px;height:94px;background:linear-gradient(180deg,#f8f6f3,#f0ece7)"></div><div class="bl" style="left:83px;top:0px;width:17px;height:11px;background:#7f8ea2;border-radius:5%;filter:blur(1px)"></div><div class="bl" style="left:131px;top:5px;width:21px;height:17px;background:#8a9cae;border-radius:5%;filter:blur(1px)"></div><div class="bl" style="left:112px;top:66px;width:56px;height:12px;background:#b89466;border-radius:5%;filter:blur(2px)"></div><div class="bl" style="left:128px;top:76px;width:40px;height:20px;background:#e6eaf0;border-radius:5%;filter:blur(2px)"></div><div class="bl" style="left:56px;top:56px;width:24px;height:40px;background:#3c3c3e;border-radius:30%;filter:blur(2px)"></div><div class="bl" style="left:64px;top:74px;width:80px;height:26px;background:#2b2a2a;border-radius:40% 40% 5% 5%;filter:blur(2px)"></div><div class="bl" style="left:74px;top:30px;width:42px;height:54px;background:#c59c8a;border-radius:45% 45% 48% 48%;filter:blur(2px)"></div><div class="bl" style="left:74px;top:26px;width:42px;height:14px;background:#8d6b50;border-radius:50% 50% 10% 10%;filter:blur(2px)"></div><div class="bl" style="left:80px;top:50px;width:32px;height:6px;background:#9a7060;border-radius:40%;filter:blur(1.5px)"></div><div class="a" style="left:0;top:73px;width:116px;height:21px;background:rgba(35,35,35,.78)"></div><div class="t" style="left:4px;top:79px;font-size:13px;color:#f4f4f4;--w:107px;transform:scaleX(0.9882);transform-origin:0 0">Андрій Коваленко</div></div>
<div class="tile" style="top:703px"><div class="a" style="left:0;top:0;width:166px;height:94px;background:#dfdcdf"></div><div class="bl" style="left:-2px;top:-2px;width:64px;height:38px;background:#e8e8ea;border-radius:2%;filter:blur(1px)"></div><div class="a" style="left:0;top:31px;width:62px;height:3px;background:#a8a8aa;filter:blur(.6px)"></div><div class="bl" style="left:50px;top:60px;width:86px;height:40px;background:#1f1f22;border-radius:45% 45% 5% 5%;filter:blur(2px)"></div><div class="bl" style="left:62px;top:3px;width:62px;height:92px;background:#261d1d;border-radius:45% 45% 10% 10%;filter:blur(2.5px)"></div><div class="bl" style="left:80px;top:14px;width:30px;height:48px;background:#d4b4ac;border-radius:45%;filter:blur(2px)"></div><svg class="a" style="left:50px;top:62px" width="86" height="32" viewBox="0 0 86 32"><g stroke="#cfcfcf" stroke-width="0.9" fill="none" stroke-dasharray="3 1 2 1" opacity=".8"><path d="M12 4 Q18 2 26 4 M34 6 Q42 3 52 5 M60 3 Q68 2 76 5 M8 12 Q16 10 24 12 M30 14 Q40 11 50 13 M56 12 Q64 10 74 13 M14 20 Q22 18 30 20 M40 22 Q48 19 58 21 M64 20 Q72 18 80 21 M10 28 Q18 26 28 28 M36 29 Q46 27 56 29"/></g></svg><div class="a" style="left:0;top:73px;width:70px;height:21px;background:rgba(35,35,35,.78)"></div><svg class="a" style="left:4px;top:77px" width="14" height="14" viewBox="0 0 14 14"><rect x="5" y="1" width="5" height="8" rx="2.5" fill="#e8555f"/><path d="M3.5 6.5 Q3.5 10.5 7.5 10.5 Q11.5 10.5 11.5 6.5 M7.5 10.5 V13 M5 13 H10" stroke="#e8555f" stroke-width="1.1" fill="none"/><path d="M1 13.5 L13.5 1" stroke="#e8555f" stroke-width="1.3"/></svg><div class="t" style="left:23px;top:79px;font-size:13px;color:#f4f4f4;--w:45px;transform:scaleX(1.0435);transform-origin:0 0">Viktoria</div></div>
<div class="a" style="left:1400px;top:803px;width:77px;height:35px;background:#101010;border-radius:5px"></div>
<svg class="a" style="left:1430px;top:814px" width="18" height="12" viewBox="0 0 18 12"><path d="M2 3 L9 10 L16 3" stroke="#b4b4b8" stroke-width="1.6" fill="none"/></svg>
<!-- bottom toolbar -->
<svg class="a" style="left:0;top:0" width="1600" height="900" viewBox="0 0 1600 900">
 <!-- mic -->
 <rect x="50" y="852" width="10" height="16" rx="5" fill="#bdbdbd"/>
 <path d="M47 862 Q47 871 55 871 Q63 871 63 862 M55 871 V875 M51 875 H59" stroke="#bdbdbd" stroke-width="1.6" fill="none"/>
 <path d="M42 875 L66 851" stroke="#e0505a" stroke-width="1.6"/>
 <path d="M89.5 865 L93 861.5 L96.5 865" stroke="#c8c8c8" stroke-width="1.5" fill="none"/>
 <!-- video -->
 <rect x="156" y="856" width="18" height="15" rx="3" fill="#bdbdbd"/>
 <path d="M175 861 L181 857 V870 L175 866Z" fill="#bdbdbd"/>
 <path d="M212.5 865 L216 861.5 L219.5 865" stroke="#c8c8c8" stroke-width="1.5" fill="none"/>
 <!-- participants -->
 <circle cx="606" cy="858" r="4.3" fill="#bdbdbd"/>
 <path d="M598 872 Q598 863.5 606 863.5 Q614 863.5 614 872Z" fill="#bdbdbd"/>
 <circle cx="617.5" cy="860" r="3.6" fill="#bdbdbd"/>
 <path d="M614 872.5 Q614 865 619 865 Q623.5 865 623.5 872.5Z" fill="#bdbdbd"/>
 <path d="M662 865 L665.5 861.5 L669 865" stroke="#c8c8c8" stroke-width="1.5" fill="none"/>
 <!-- chat -->
 <path d="M718 853.5 H733 Q736 853.5 736 856.5 V865 Q736 868 733 868 H723 L720 872 V868 Q715 868 715 865 V856.5 Q715 853.5 718 853.5Z" fill="#bdbdbd"/>
 <path d="M756.5 865 L760 861.5 L763.5 865" stroke="#c8c8c8" stroke-width="1.5" fill="none"/>
 <!-- share -->
 <rect x="834" y="854" width="25" height="18.5" rx="2.5" fill="#2ed55c"/>
 <path d="M846.5 868 V859 M842.5 862.5 L846.5 858.5 L850.5 862.5" stroke="#0d2b14" stroke-width="1.8" fill="none"/>
 <!-- record -->
 <circle cx="962" cy="863.5" r="9.5" fill="none" stroke="#bdbdbd" stroke-width="1.6"/>
 <circle cx="962" cy="863.5" r="7" fill="#bdbdbd"/>
 <!-- reactions -->
 <circle cx="1046" cy="863" r="9.3" fill="#bdbdbd"/>
 <circle cx="1042.7" cy="861" r="1.3" fill="#1b1b1b"/><circle cx="1049.3" cy="861" r="1.3" fill="#1b1b1b"/>
 <path d="M1041.5 865 Q1046 869.5 1050.5 865" stroke="#1b1b1b" stroke-width="1.3" fill="none"/>
 <circle cx="1054.5" cy="855" r="5" fill="#1b1b1b"/>
 <path d="M1054.5 851.5 V858.5 M1051 855 H1058" stroke="#bdbdbd" stroke-width="1.4"/>
 <!-- apps -->
 <path d="M1126 864 V859 Q1126 856 1129 856 H1132 M1141 864 V869 Q1141 872 1138 872 H1134" stroke="#bdbdbd" stroke-width="1.5" fill="none"/>
 <circle cx="1138.5" cy="858.5" r="2.3" stroke="#bdbdbd" stroke-width="1.4" fill="none"/>
 <circle cx="1128.5" cy="869.5" r="2.3" stroke="#bdbdbd" stroke-width="1.4" fill="none"/>
 <!-- shield -->
 <path d="M21 13.5 Q24 16 27.5 16 V22 Q27.5 27 21 30 Q14.5 27 14.5 22 V16 Q18 16 21 13.5Z" fill="#31d35c" stroke="#0c0c0c" stroke-width="0.8"/>
 <path d="M18 22 L20.3 24.3 L24.5 19.8" stroke="#0c2a12" stroke-width="1.6" fill="none"/>
 <!-- view icon -->
 <rect x="1548" y="13" width="7" height="11" fill="#e6e6e6"/>
 <rect x="1556.5" y="13" width="3" height="3" rx="1" fill="#e6e6e6"/>
 <rect x="1556.5" y="17" width="3" height="3" rx="1" fill="#e6e6e6"/>
 <rect x="1556.5" y="21" width="3" height="3" rx="1" fill="#e6e6e6"/>
 <path d="M1022.5 9.5 L1025.5 12.5 L1028.5 9.5" stroke="#fff" stroke-width="1.5" fill="none"/>
</svg>
<div class="tb" style="left:628px;top:855px;font-size:12.5px;--w:12px;transform:scaleX(0.8629);transform-origin:0 0">16</div>
<div class="tb" style="left:12px;top:882px;--w:86px;transform:scaleX(0.9919);transform-origin:0 0">Включить звук</div>
<div class="tb" style="left:115px;top:882px;--w:106px;transform:scaleX(0.9568);transform-origin:0 0">Остановить видео</div>
<div class="tb" style="left:580px;top:882px;--w:61px;transform:scaleX(0.9821);transform-origin:0 0">Участники</div>
<div class="tb" style="left:716px;top:882px;--w:20px;transform:scaleX(0.9269);transform-origin:0 0">Чат</div>
<div class="tb" style="left:782px;top:882px;color:#2fd05a;--w:130px;transform:scaleX(0.9786);transform-origin:0 0">Демонстрация экрана</div>
<div class="tb" style="left:942px;top:882px;--w:40px;transform:scaleX(0.9377);transform-origin:0 0">Запись</div>
<div class="tb" style="left:1021px;top:882px;--w:49px;transform:scaleX(0.9757);transform-origin:0 0">Реакции</div>
<div class="tb" style="left:1096px;top:882px;--w:76px;transform:scaleX(0.9992);transform-origin:0 0">Приложения</div>
<div class="a" style="left:1523px;top:858px;width:64px;height:28px;background:#c8272d;border-radius:6px"></div>
<div class="t" style="left:1535px;top:866px;font-size:13px;font-weight:bold;color:#fff;--w:39px;transform:scaleX(0.9103);transform-origin:0 0">Выйти</div>
</body></html>
